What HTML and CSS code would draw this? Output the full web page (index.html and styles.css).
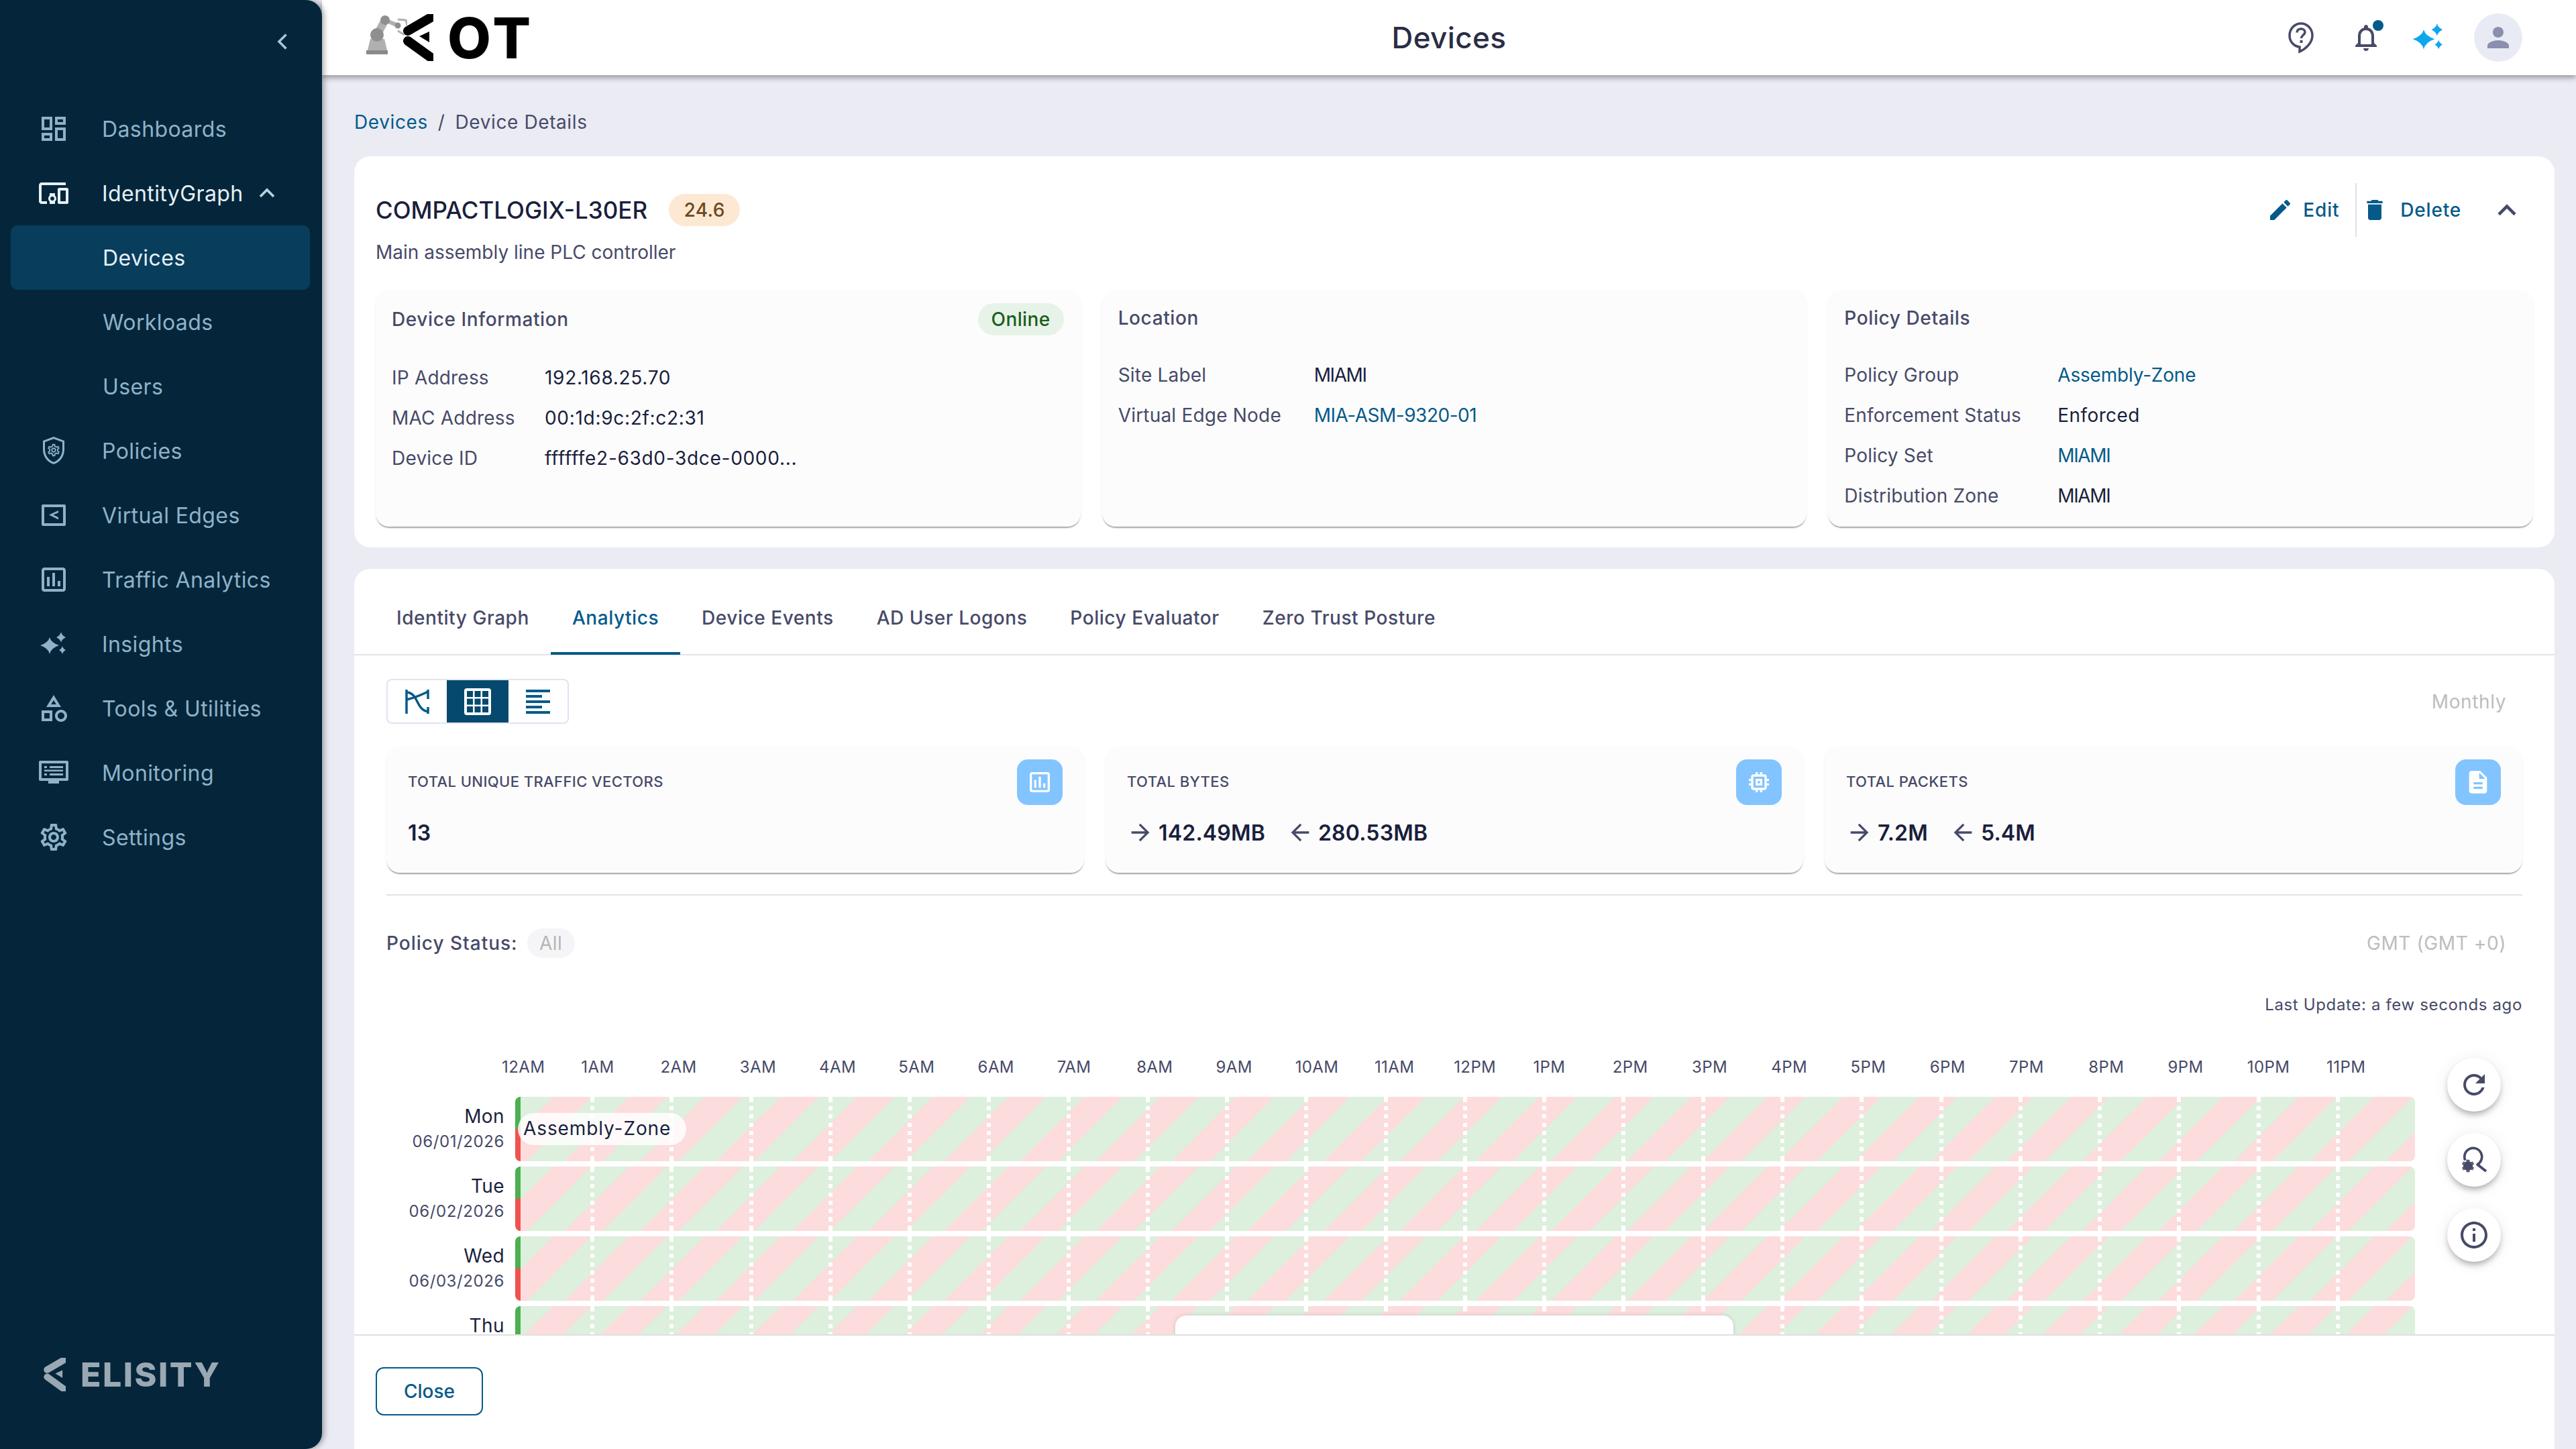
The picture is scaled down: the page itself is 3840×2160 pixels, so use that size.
FILE: index.html
```html
<!DOCTYPE html>
<html lang="en">
<head>
    <meta charset="UTF-8">
    <title>Devices</title>
    <link rel="stylesheet" href="styles.css">
</head>
<body>
<svg class="defs" width="0" height="0">
    <symbol id="sparkle" viewBox="0 0 40 36">
        <path d="M14 8Q16 16 28 20Q16 24 14 33Q12 24 0 20Q12 16 14 8Z"/>
        <path d="M31 0Q32 5 38 8Q32 11 31 16Q30 11 24 8Q30 5 31 0Z"/>
        <path d="M33 21Q34 25 38 27Q34 29 33 33Q32 29 28 27Q32 25 33 21Z"/>
    </symbol>
    <symbol id="chevron-mark" viewBox="0 0 46 70">
        <path d="M44 4L8 25" fill="none" stroke="currentColor" stroke-width="14" stroke-linecap="round"/>
        <path d="M8 40L44 66" fill="none" stroke="currentColor" stroke-width="14" stroke-linecap="round"/>
        <path d="M25 33L40 26V42Z"/>
    </symbol>
    <symbol id="bars" viewBox="0 0 24 24">
        <path d="M19 3H5c-1.1 0-2 .9-2 2v14c0 1.1.9 2 2 2h14c1.1 0 2-.9 2-2V5c0-1.1-.9-2-2-2zm0 16H5V5h14v14z M7 10h2v7H7zm4-3h2v10h-2zm4 6h2v4h-2z"/>
    </symbol>
    <symbol id="gear" viewBox="0 0 24 24">
        <path d="M19.43 12.98c.04-.32.07-.64.07-.98 0-.34-.03-.66-.07-.98l2.11-1.65c.19-.15.24-.42.12-.64l-2-3.46c-.09-.16-.26-.25-.44-.25-.06 0-.12.01-.17.03l-2.49 1c-.52-.4-1.08-.73-1.69-.98l-.38-2.65C14.46 2.18 14.25 2 14 2h-4c-.25 0-.46.18-.49.42l-.38 2.65c-.61.25-1.17.59-1.69.98l-2.49-1c-.06-.02-.12-.03-.18-.03-.17 0-.34.09-.43.25l-2 3.46c-.13.22-.07.49.12.64l2.11 1.65c-.04.32-.07.65-.07.98 0 .33.03.66.07.98l-2.11 1.65c-.19.15-.24.42-.12.64l2 3.46c.09.16.26.25.44.25.06 0 .12-.01.17-.03l2.49-1c.52.4 1.08.73 1.69.98l.38 2.65c.03.24.24.42.49.42h4c.25 0 .46-.18.49-.42l.38-2.65c.61-.25 1.17-.59 1.69-.98l2.49 1c.06.02.12.03.18.03.17 0 .34-.09.43-.25l2-3.46c.12-.22.07-.49-.12-.64l-2.11-1.65zm-1.98-1.71c.04.31.05.52.05.73 0 .21-.02.43-.05.73l-.14 1.13.89.7 1.08.84-.7 1.21-1.27-.51-1.04-.42-.9.68c-.43.32-.84.56-1.25.73l-1.06.43-.16 1.13-.2 1.35h-1.4l-.19-1.35-.16-1.13-1.06-.43c-.43-.18-.83-.41-1.23-.71l-.91-.7-1.06.43-1.27.51-.7-1.21 1.08-.84.89-.7-.14-1.13c-.03-.31-.05-.54-.05-.74s.02-.43.05-.73l.14-1.13-.89-.7-1.08-.84.7-1.21 1.27.51 1.04.42.9-.68c.43-.32.84-.56 1.25-.73l1.06-.43.16-1.13.2-1.35h1.39l.19 1.35.16 1.13 1.06.43c.43.18.83.41 1.23.71l.91.7 1.06-.43 1.27-.51.7 1.21-1.07.85-.89.7.14 1.13zM12 8c-2.21 0-4 1.79-4 4s1.79 4 4 4 4-1.79 4-4-1.79-4-4-4zm0 6c-1.1 0-2-.9-2-2s.9-2 2-2 2 .9 2 2-.9 2-2 2z"/>
    </symbol>
    <symbol id="arrow-right" viewBox="0 0 24 24">
        <path d="M12 4l-1.41 1.41L16.17 11H4v2h12.17l-5.58 5.59L12 20l8-8z"/>
    </symbol>
    <symbol id="arrow-left" viewBox="0 0 24 24">
        <path d="M20 11H7.83l5.59-5.59L12 4l-8 8 8 8 1.41-1.41L7.83 13H20z"/>
    </symbol>
</svg>

<div class="app">
    <aside class="sidebar">
        <div class="collapse-row">
            <svg class="chev-small" viewBox="0 0 24 24"><path d="M15 5l-7 7 7 7" fill="none" stroke="currentColor" stroke-width="2.4"/></svg>
        </div>
        <nav class="nav">
            <a class="nav-item">
                <svg class="nav-icon" viewBox="0 0 24 24"><path d="M19 5v2h-4V5h4M9 5v6H5V5h4m10 8v6h-4v-6h4M9 17v2H5v-2h4M21 3h-8v6h8V3zM11 3H3v10h8V3zm10 8h-8v10h8V11zm-10 4H3v6h8v-6z"/></svg>
                <span>Dashboards</span>
            </a>
            <a class="nav-item open">
                <svg class="nav-icon" viewBox="0 0 24 24"><path d="M3 6h18V4H3c-1.1 0-2 .9-2 2v12c0 1.1.9 2 2 2h4v-2H3V6zm10 6H9v1.78c-.61.55-1 1.33-1 2.22s.39 1.67 1 2.22V20h4v-1.78c.61-.55 1-1.34 1-2.22s-.39-1.67-1-2.22V12zm-2 5.5c-.83 0-1.5-.67-1.5-1.5s.67-1.5 1.5-1.5 1.5.67 1.5 1.5-.67 1.5-1.5 1.5zM22 8h-6c-.5 0-1 .5-1 1v10c0 .5.5 1 1 1h6c.5 0 1-.5 1-1V9c0-.5-.5-1-1-1zm-1 10h-4v-8h4v8z"/></svg>
                <span>IdentityGraph</span>
                <svg class="nav-caret" viewBox="0 0 24 24"><path d="M4 16l8-8 8 8" fill="none" stroke="currentColor" stroke-width="3"/></svg>
            </a>
            <a class="nav-item sub active"><span>Devices</span></a>
            <a class="nav-item sub"><span>Workloads</span></a>
            <a class="nav-item sub"><span>Users</span></a>
            <a class="nav-item">
                <svg class="nav-icon" viewBox="0 0 24 24"><path d="M12 1.5L4 4.5v6.6c0 5.05 3.41 9.76 8 10.9 4.59-1.14 8-5.85 8-10.9V4.5l-8-3zm6.5 9.6c0 4.2-2.8 8.1-6.5 9.3-3.7-1.2-6.5-5.1-6.5-9.3V5.5L12 3.1l6.5 2.4v5.6z"/><use href="#gear" x="6.5" y="6" width="11" height="11"/></svg>
                <span>Policies</span>
            </a>
            <a class="nav-item">
                <svg class="nav-icon" viewBox="0 0 24 24"><path d="M20 4H4c-.6 0-1 .4-1 1v14c0 .6.4 1 1 1h16c.6 0 1-.4 1-1V5c0-.6-.4-1-1-1zm-1 14H5V6h14v12z"/><path d="M15.5 8.5L8.5 11.8l7 3.4v-1.7l-3.8-1.7 3.8-1.7z"/></svg>
                <span>Virtual Edges</span>
            </a>
            <a class="nav-item">
                <svg class="nav-icon"><use href="#bars"/></svg>
                <span>Traffic Analytics</span>
            </a>
            <a class="nav-item">
                <svg class="nav-icon spark"><use href="#sparkle"/></svg>
                <span>Insights</span>
            </a>
            <a class="nav-item">
                <svg class="nav-icon" viewBox="0 0 24 24"><path d="M12 2l-5.5 9h11L12 2zm0 3.84L13.93 9h-3.87L12 5.84zM17.5 13c-2.49 0-4.5 2.01-4.5 4.5s2.01 4.5 4.5 4.5 4.5-2.01 4.5-4.5-2.01-4.5-4.5-4.5zm0 7c-1.38 0-2.5-1.12-2.5-2.5s1.12-2.5 2.5-2.5 2.5 1.12 2.5 2.5-1.12 2.5-2.5 2.5zM3 21.5h8v-8H3v8zm2-6h4v4H5v-4z"/></svg>
                <span>Tools &amp; Utilities</span>
            </a>
            <a class="nav-item">
                <svg class="nav-icon" viewBox="0 0 24 24"><path d="M22 3H2C1.4 3 1 3.4 1 4v13c0 .6.4 1 1 1h6v2h8v-2h6c.6 0 1-.4 1-1V4c0-.6-.4-1-1-1zm-1 13H3V5h18v11z"/><path d="M5 7h2v1.5H5zM9 7h10v1.5H9zM5 12.5h2V14H5zM9 12.5h10V14H9zM5 9.8h14V11H5z"/></svg>
                <span>Monitoring</span>
            </a>
            <a class="nav-item">
                <svg class="nav-icon"><use href="#gear"/></svg>
                <span>Settings</span>
            </a>
        </nav>
        <div class="side-logo">
            <svg class="side-mark"><use href="#chevron-mark"/></svg>
            <span class="side-word">ELISITY</span>
        </div>
    </aside>

    <div class="content">
        <header class="topbar">
            <div class="brand">
                <svg class="robot" viewBox="0 0 62 60">
                    <path d="M7 36H28L32 53H3Z" fill="#b0b0b0"/>
                    <rect x="1" y="53" width="32" height="6" fill="#8a8a8a"/>
                    <path d="M17 30L29 8" stroke="#b0b0b0" stroke-width="12"/>
                    <path d="M29 8L48 16" stroke="#b0b0b0" stroke-width="6"/>
                    <path d="M48 7L60 8L62 16M48 24L58 30" fill="none" stroke="#b0b0b0" stroke-width="3"/>
                    <circle cx="17" cy="30" r="10" fill="#8f8f8f"/>
                    <circle cx="29" cy="8" r="7" fill="#8f8f8f"/>
                    <circle cx="48" cy="16" r="4.5" fill="#8f8f8f"/>
                </svg>
                <svg class="brand-mark"><use href="#chevron-mark"/></svg>
                <span class="brand-ot">OT</span>
            </div>
            <h1 class="page-title">Devices</h1>
            <div class="top-actions">
                <svg class="help" viewBox="0 0 40 48"><path d="M20 3C10.5 3 3 11 3 21c0 9 6.5 16 15 17v7c9-4 19-13 19-24C37 11 29.5 3 20 3z" fill="none" stroke="#474a68" stroke-width="3.5"/><path d="M14 16.5c0-3.5 2.8-5.500 6-5.500s6 2 6 5c0 4-5.500 4.500-5.500 9" fill="none" stroke="#474a68" stroke-width="3.5"/><rect x="18.5" y="28" width="4" height="4" fill="#474a68"/></svg>
                <span class="bell">
                    <svg viewBox="0 0 24 24"><path d="M12 22c1.1 0 2-.9 2-2h-4c0 1.1.9 2 2 2zm6-6v-5c0-3.07-1.63-5.64-4.5-6.32V4c0-.83-.67-1.5-1.5-1.5s-1.5.67-1.5 1.5v.68C7.64 5.36 6 7.92 6 11v5l-2 2v1h16v-1l-2-2zm-2 1H8v-6c0-2.48 1.51-4.5 4-4.5s4 2.02 4 4.5v6z"/></svg>
                    <i class="bell-dot"></i>
                </span>
                <svg class="ai-spark"><use href="#sparkle"/></svg>
                <span class="avatar">
                    <svg viewBox="0 0 24 24"><path d="M12 12c2.21 0 4-1.79 4-4s-1.79-4-4-4-4 1.79-4 4 1.79 4 4 4zm0 2c-2.67 0-8 1.34-8 4v2h16v-2c0-2.66-5.33-4-8-4z"/></svg>
                </span>
            </div>
        </header>

        <main class="page">
            <div class="breadcrumb">
                <a class="link">Devices</a><span class="crumb-sep">/</span><span>Device Details</span>
            </div>

            <section class="card summary">
                <div class="summary-head">
                    <div>
                        <div class="device-title">
                            <h2>COMPACTLOGIX-L30ER</h2>
                            <span class="version">24.6</span>
                        </div>
                        <p class="device-desc">Main assembly line PLC controller</p>
                    </div>
                    <div class="summary-actions">
                        <a class="action edit">
                            <svg viewBox="0 0 24 24"><path d="M3 17.25V21h3.75L17.81 9.94l-3.75-3.75L3 17.25zM20.71 7.04c.39-.39.39-1.02 0-1.41l-2.34-2.34c-.39-.39-1.02-.39-1.41 0l-1.83 1.83 3.75 3.75 1.83-1.83z"/></svg>
                            <span>Edit</span>
                        </a>
                        <i class="action-sep"></i>
                        <a class="action">
                            <svg viewBox="0 0 24 24"><path d="M6 19c0 1.1.9 2 2 2h8c1.1 0 2-.9 2-2V7H6v12zM19 4h-3.5l-1-1h-5l-1 1H5v2h14V4z"/></svg>
                            <span>Delete</span>
                        </a>
                        <svg class="summary-caret" viewBox="0 0 24 24"><path d="M3 17l9-9 9 9" fill="none" stroke="#474a68" stroke-width="3.5"/></svg>
                    </div>
                </div>

                <div class="info-grid">
                    <div class="info-card">
                        <div class="info-head">
                            <h3>Device Information</h3>
                            <span class="status-pill">Online</span>
                        </div>
                        <dl class="info-list device-list">
                            <dt>IP Address</dt><dd>192.168.25.70</dd>
                            <dt>MAC Address</dt><dd>00:1d:9c:2f:c2:31</dd>
                            <dt>Device ID</dt><dd>ffffffe2-63d0-3dce-0000...</dd>
                        </dl>
                    </div>
                    <div class="info-card">
                        <div class="info-head"><h3>Location</h3></div>
                        <dl class="info-list location-list">
                            <dt>Site Label</dt><dd class="caps">MIAMI</dd>
                            <dt>Virtual Edge Node</dt><dd class="link">MIA-ASM-9320-01</dd>
                        </dl>
                    </div>
                    <div class="info-card">
                        <div class="info-head"><h3>Policy Details</h3></div>
                        <dl class="info-list policy-list">
                            <dt>Policy Group</dt><dd class="link">Assembly-Zone</dd>
                            <dt>Enforcement Status</dt><dd>Enforced</dd>
                            <dt>Policy Set</dt><dd class="link caps">MIAMI</dd>
                            <dt>Distribution Zone</dt><dd class="caps">MIAMI</dd>
                        </dl>
                    </div>
                </div>
            </section>

            <section class="card detail">
                <div class="tabs">
                    <a class="tab">Identity Graph</a>
                    <a class="tab active">Analytics</a>
                    <a class="tab">Device Events</a>
                    <a class="tab">AD User Logons</a>
                    <a class="tab">Policy Evaluator</a>
                    <a class="tab">Zero Trust Posture</a>
                </div>

                <div class="detail-body">
                    <div class="view-row">
                        <div class="view-toggle">
                            <button class="view-btn">
                                <svg viewBox="0 0 36 36"><path d="M2 0V36M34 0V14M34 26V36M2 15C14 12 24 8 34 3M3 4C20 6 16 30 34 33" fill="none" stroke="#065a8a" stroke-width="3.5"/></svg>
                            </button>
                            <button class="view-btn active">
                                <svg viewBox="0 0 40 40"><rect x="0" y="0" width="40" height="40" rx="4" fill="#fff"/><path d="M4 4h9v9H4zM15.5 4h9v9h-9zM27 4h9v9h-9zM4 15.5h9v9H4zM15.5 15.5h9v9h-9zM27 15.5h9v9h-9zM4 27h9v9H4zM15.5 27h9v9h-9zM27 27h9v9h-9z" fill="#06496e"/></svg>
                            </button>
                            <button class="view-btn">
                                <svg viewBox="0 0 36 36"><path d="M0 0h36v4H0zM0 8h24v4H0zM0 16h36v4H0zM0 24h24v4H0zM0 32h36v4H0z" fill="#065a8a"/></svg>
                            </button>
                        </div>
                        <span class="muted-select">Monthly</span>
                    </div>

                    <div class="stat-grid">
                        <div class="stat-card">
                            <div class="stat-head">
                                <span class="stat-label">TOTAL UNIQUE TRAFFIC VECTORS</span>
                                <span class="stat-icon"><svg><use href="#bars"/></svg></span>
                            </div>
                            <div class="stat-value">13</div>
                        </div>
                        <div class="stat-card">
                            <div class="stat-head">
                                <span class="stat-label">TOTAL BYTES</span>
                                <span class="stat-icon"><svg viewBox="0 0 24 24"><path d="M15 9H9v6h6V9zm-2 4h-2v-2h2v2zm8-2V9h-2V7c0-1.1-.9-2-2-2h-2V3h-2v2h-2V3H9v2H7c-1.1 0-2 .9-2 2v2H3v2h2v2H3v2h2v2c0 1.1.9 2 2 2h2v2h2v-2h2v2h2v-2h2c1.1 0 2-.9 2-2v-2h2v-2h-2v-2h2zm-4 6H7V7h10v10z"/></svg></span>
                            </div>
                            <div class="stat-value">
                                <svg class="stat-arrow"><use href="#arrow-right"/></svg><span>142.49MB</span>
                                <svg class="stat-arrow second"><use href="#arrow-left"/></svg><span>280.53MB</span>
                            </div>
                        </div>
                        <div class="stat-card">
                            <div class="stat-head">
                                <span class="stat-label">TOTAL PACKETS</span>
                                <span class="stat-icon"><svg viewBox="0 0 24 24"><path d="M14 2H6c-1.1 0-1.99.9-1.99 2L4 20c0 1.1.89 2 1.99 2H18c1.1 0 2-.9 2-2V8l-6-6zm2 16H8v-2h8v2zm0-4H8v-2h8v2zm-3-5V3.5L18.5 9H13z"/></svg></span>
                            </div>
                            <div class="stat-value">
                                <svg class="stat-arrow"><use href="#arrow-right"/></svg><span>7.2M</span>
                                <svg class="stat-arrow second"><use href="#arrow-left"/></svg><span>5.4M</span>
                            </div>
                        </div>
                    </div>

                    <div class="filter-row">
                        <div class="policy-filter">
                            <span class="filter-label">Policy Status:</span>
                            <span class="filter-chip">All</span>
                        </div>
                        <span class="muted-select">GMT (GMT +0)</span>
                    </div>

                    <div class="last-update">Last Update: a few seconds ago</div>

                    <div class="heat">
                        <div class="heat-main">
                            <div class="heat-hours" id="heatHours"></div>
                            <div class="heat-rows" id="heatRows"></div>
                        </div>
                        <div class="heat-tools">
                            <button class="fab"><svg viewBox="0 0 24 24"><path d="M17.65 6.35C16.2 4.9 14.21 4 12 4c-4.42 0-7.99 3.58-7.99 8s3.57 8 7.99 8c3.73 0 6.84-2.55 7.73-6h-2.08c-.82 2.33-3.04 4-5.65 4-3.31 0-6-2.69-6-6s2.69-6 6-6c1.66 0 3.14.69 4.22 1.78L13 11h7V4l-2.35 2.35z"/></svg></button>
                            <button class="fab"><svg viewBox="0 0 24 24"><path d="M5.400 12.300A6.500 6.500 0 1 1 14.300 15.500" fill="none" stroke="#474a68" stroke-width="1.800"/><path d="M14 15L21 20.500" fill="none" stroke="#474a68" stroke-width="2"/><circle cx="7.500" cy="16.500" r="3.400"/><use href="#gear" x="2" y="11" width="11" height="11"/></svg></button>
                            <button class="fab"><svg viewBox="0 0 24 24"><path d="M11 7h2v2h-2zm0 4h2v6h-2zm1-9C6.48 2 2 6.48 2 12s4.48 10 10 10 10-4.48 10-10S17.52 2 12 2zm0 18c-4.41 0-8-3.59-8-8s3.59-8 8-8 8 3.59 8 8-3.59 8-8 8z"/></svg></button>
                        </div>
                    </div>

                    <div class="floating-panel"></div>
                </div>

                <div class="detail-foot">
                    <button class="btn-close">Close</button>
                </div>
            </section>
        </main>
    </div>
</div>
<script src="script.js"></script>
</body>
</html>
```

FILE: styles.css
```css
* {
    box-sizing: border-box;
}
html, body {
    margin: 0;
    padding: 0;
}
body {
    font-family: "Inter", "Liberation Sans", sans-serif;
    font-size: 28px;
    letter-spacing: 0.4px;
    color: #1a1f3d;
    background-color: #eaebf3;
}
h1, h2, h3, p, dl, dd {
    margin: 0;
}
button {
    font-family: inherit;
    border: none;
    padding: 0;
    background: none;
}
.defs {
    position: absolute;
}
.link {
    color: #065a8a;
}
.app {
    display: flex;
    width: 3840px;
    height: 2160px;
    overflow: hidden;
}

/* sidebar */
.sidebar {
    width: 480px;
    flex: none;
    display: flex;
    flex-direction: column;
    background-color: #05263a;
    border-radius: 0 24px 24px 0;
    box-shadow: 3px 0 8px rgba(0, 0, 0, 0.35);
    position: relative;
    z-index: 3;
}
.collapse-row {
    height: 144px;
    padding: 44px 40px 0 0;
    display: flex;
    justify-content: flex-end;
}
.chev-small {
    width: 36px;
    height: 36px;
    color: #a9c4d6;
}
.nav {
    display: flex;
    flex-direction: column;
}
.nav-item {
    height: 96px;
    margin: 0 18px 0 16px;
    padding-left: 40px;
    display: flex;
    align-items: center;
    border-radius: 10px;
    font-size: 32px;
    color: #8fb2c9;
    fill: #8fb2c9;
}
.nav-item span {
    margin-left: 48px;
}
.nav-icon {
    width: 48px;
    height: 48px;
    flex: none;
    fill: #8fb2c9;
    margin-left: 0;
}
.nav-icon.spark {
    height: 36px;
}
.nav-item.sub span {
    margin-left: 97px;
}
.nav-item.open {
    color: #e6f0f6;
}
.nav-item.open .nav-icon {
    fill: #e6f0f6;
}
.nav-caret {
    width: 30px;
    height: 30px;
    margin-left: 20px;
    color: #b8d0df;
}
.nav-item.active {
    background-color: #083d5c;
    color: #e6f0f6;
}
.side-logo {
    margin-top: auto;
    padding: 0 0 86px 64px;
    display: flex;
    align-items: center;
    color: #9aa8b4;
    fill: #9aa8b4;
}
.side-mark {
    width: 34px;
    height: 50px;
}
.side-word {
    margin-left: 22px;
    font-size: 50px;
    line-height: 48px;
    font-weight: 800;
    letter-spacing: 2.5px;
}

/* top bar */
.content {
    flex: 1;
    min-width: 0;
    display: flex;
    flex-direction: column;
}
.topbar {
    height: 112px;
    flex: none;
    padding: 0 80px 0 64px;
    display: flex;
    align-items: center;
    justify-content: space-between;
    position: relative;
    background-color: #fff;
    box-shadow: 0 4px 8px rgba(0, 0, 0, 0.35);
    z-index: 2;
}
.brand {
    display: flex;
    align-items: center;
}
.robot {
    width: 62px;
    height: 60px;
    margin-top: -8px;
    margin-left: 1px;
    flex: none;
}
.brand-mark {
    width: 46px;
    height: 70px;
    margin-left: -7px;
    color: #000;
    fill: #000;
    position: relative;
}
.brand-ot {
    margin-left: 21px;
    margin-top: 2px;
    font-size: 84px;
    line-height: 84px;
    font-weight: 800;
    color: #000;
    letter-spacing: 5px;
}
.page-title {
    position: absolute;
    left: 0;
    right: 0;
    text-align: center;
    font-size: 44px;
    font-weight: 500;
    color: #2a2d45;
    letter-spacing: 0.4px;
}
.top-actions {
    display: flex;
    align-items: center;
}
.help {
    width: 40px;
    height: 48px;
}
.bell {
    width: 48px;
    height: 48px;
    margin-left: 53px;
    position: relative;
    fill: #474a68;
}
.bell-dot {
    position: absolute;
    top: -2px;
    right: -2px;
    width: 16px;
    height: 16px;
    border-radius: 50%;
    background-color: #065a8a;
}
.ai-spark {
    width: 50px;
    height: 42px;
    margin-left: 44px;
    fill: #0da7ee;
}
.avatar {
    width: 72px;
    height: 72px;
    margin-left: 43px;
    border-radius: 50%;
    background-color: #e9ebf4;
    display: flex;
    align-items: center;
    justify-content: center;
    fill: #8a8fae;
}
.avatar svg {
    width: 48px;
    height: 48px;
}

/* page */
.page {
    flex: 1;
    min-height: 0;
    padding: 0 32px 0 48px;
    display: flex;
    flex-direction: column;
}
.breadcrumb {
    height: 121px;
    padding-top: 52px;
    line-height: 36px;
    color: #474a68;
    letter-spacing: 0.6px;
}
.crumb-sep {
    margin: 0 15px;
}
.card {
    background-color: #fff;
    border-radius: 24px;
}
.summary {
    height: 583px;
    padding: 0 32px;
}
.summary-head {
    height: 202px;
    padding-top: 60px;
    display: flex;
    justify-content: space-between;
}
.device-title {
    display: flex;
    align-items: center;
    height: 40px;
}
.device-title h2 {
    font-size: 35px;
    font-weight: 500;
    letter-spacing: 0;
}
.version {
    margin-left: 32px;
    width: 106px;
    height: 48px;
    line-height: 48px;
    text-align: center;
    border-radius: 24px;
    background-color: #fde9d3;
    color: #6b4a20;
    font-weight: 500;
}
.device-desc {
    margin-top: 25px;
    line-height: 36px;
    color: #474a68;
    letter-spacing: 0;
}
.summary-actions {
    display: flex;
    align-items: center;
    height: 80px;
    margin-top: -20px;
}
.action {
    display: flex;
    align-items: center;
    color: #065a8a;
    fill: #065a8a;
    font-weight: 500;
    letter-spacing: 0.8px;
}
.action svg {
    width: 40px;
    height: 40px;
    margin-right: 18px;
}
.action.edit svg {
    margin-right: 14px;
}
.action-sep {
    width: 2px;
    height: 80px;
    background-color: #dfe1ec;
    margin: 0 7px 0 24px;
}
.summary-caret {
    width: 32px;
    height: 32px;
    margin-left: 52px;
    margin-right: 23px;
}
.info-grid {
    display: grid;
    grid-template-columns: repeat(3, 1fr);
    gap: 32px;
}
.info-card {
    height: 350px;
    padding: 17px 24px;
    background-color: #fcfcfc;
    border-radius: 20px;
    box-shadow: 0 3px 2px -1px rgba(0, 0, 0, 0.35), 0 0 6px rgba(0, 0, 0, 0.03);
}
.info-head {
    min-height: 44px;
    display: flex;
    align-items: center;
    justify-content: space-between;
    margin-bottom: 33px;
}
.info-head h3 {
    font-size: 28px;
    font-weight: 500;
    color: #474a68;
    letter-spacing: 0.6px;
}
.status-pill {
    height: 48px;
    line-height: 48px;
    padding: 0 20px;
    margin-right: 1px;
    border-radius: 24px;
    background-color: #e7f3e8;
    color: #1b5e20;
    font-weight: 500;
}
.info-list {
    display: grid;
    grid-auto-rows: 60px;
    align-items: center;
}
.device-list {
    grid-template-columns: 228px 1fr;
}
.device-list dd {
    letter-spacing: 0.7px;
}
.location-list {
    grid-template-columns: 292px 1fr;
}
.policy-list {
    grid-template-columns: 318px 1fr;
}
.info-list dt {
    color: #474a68;
    letter-spacing: 0.2px;
}
.info-list .link {
    letter-spacing: -0.2px;
}
.location-list .link {
    letter-spacing: -0.5px;
}
.info-list .caps {
    letter-spacing: -1.4px;
}

/* detail card */
.detail {
    flex: 1;
    min-height: 0;
    margin-top: 32px;
    border-radius: 24px 24px 0 0;
    display: flex;
    flex-direction: column;
    overflow: hidden;
}
.tabs {
    flex: none;
    height: 129px;
    padding: 32px 0 0 31px;
    display: flex;
    border-bottom: 2px solid #e3e4ea;
}
.tab {
    height: 96px;
    padding: 24px 32px 0;
    line-height: 34px;
    color: #474a68;
    font-weight: 500;
    letter-spacing: 0.55px;
}
.tab.active {
    color: #065a8a;
    border-bottom: 4px solid #065a8a;
}
.detail-body {
    flex: 1;
    min-height: 0;
    padding: 35px 48px 0;
    overflow: hidden;
    position: relative;
}
.view-row {
    height: 67px;
    padding-right: 24px;
    display: flex;
    justify-content: space-between;
    align-items: center;
}
.muted-select {
    color: #bdbdbd;
    letter-spacing: 0.6px;
}
.view-toggle {
    display: flex;
    height: 67px;
    border: 2px solid #e0e4ef;
    border-radius: 8px;
    overflow: hidden;
}
.view-btn {
    width: 88px;
    display: flex;
    align-items: center;
    justify-content: center;
}
.view-btn svg {
    width: 36px;
    height: 36px;
}
.view-btn.active {
    width: 92px;
    background-color: #06496e;
}
.view-btn.active svg {
    width: 40px;
    height: 40px;
}
.stat-grid {
    margin-top: 36px;
    padding-bottom: 32px;
    display: grid;
    grid-template-columns: repeat(3, 1fr);
    gap: 32px;
    border-bottom: 2px solid #e3e3e3;
}
.stat-card {
    height: 186px;
    padding: 17px 32px 0;
    background-color: #fcfcfc;
    border-radius: 20px;
    box-shadow: 0 3px 2px -1px rgba(0, 0, 0, 0.35), 0 0 6px rgba(0, 0, 0, 0.03);
}
.stat-head {
    display: flex;
    align-items: center;
    justify-content: space-between;
}
.stat-label {
    font-size: 22px;
    font-weight: 500;
    color: #474a68;
    letter-spacing: 0.4px;
    padding-bottom: 3px;
}
.stat-icon {
    width: 68px;
    height: 68px;
    border-radius: 16px;
    background-color: #82c4ff;
    display: flex;
    align-items: center;
    justify-content: center;
    fill: #fff;
}
.stat-icon svg {
    width: 40px;
    height: 40px;
}
.stat-value {
    margin-top: 21px;
    height: 40px;
    display: flex;
    align-items: center;
    font-size: 32px;
    font-weight: 600;
    letter-spacing: 0.2px;
}
.stat-arrow {
    width: 40px;
    height: 40px;
    margin-right: 7px;
    fill: #474a68;
}
.stat-arrow.second {
    margin-left: 32px;
}
.filter-row {
    margin-top: 48px;
    height: 46px;
    padding-right: 24px;
    display: flex;
    justify-content: space-between;
    align-items: center;
}
.policy-filter {
    display: flex;
    align-items: center;
}
.filter-label {
    color: #474a68;
    font-weight: 500;
    letter-spacing: 1px;
}
.filter-chip {
    margin-left: 14px;
    width: 71px;
    height: 44px;
    line-height: 44px;
    text-align: center;
    border-radius: 22px;
    background-color: #f5f5f7;
    color: #b5b5b5;
}
.last-update {
    margin-top: 53px;
    line-height: 32px;
    text-align: right;
    font-size: 24px;
    letter-spacing: 0.65px;
    color: #474a68;
}

/* heat map */
.heat {
    margin-top: 60px;
    display: flex;
}
.heat-main {
    width: 3024px;
    flex: none;
}
.heat-hours {
    height: 34px;
    padding-left: 172px;
    display: flex;
    line-height: 34px;
    font-size: 24px;
    color: #474a68;
}
.hour {
    width: 118.27px;
    flex: none;
}
.heat-rows {
    margin-top: 27px;
    display: flex;
    flex-direction: column;
    gap: 8px;
}
.heat-row {
    display: flex;
    height: 96px;
}
.day-label {
    width: 176px;
    padding-top: 10px;
    margin-right: 16px;
    flex: none;
    text-align: right;
}
.day-name {
    line-height: 38px;
    font-size: 28px;
}
.day-date {
    line-height: 38px;
    font-size: 24px;
    letter-spacing: 0.6px;
    color: #474a68;
}
.heat-bar {
    flex: 1;
    display: flex;
    position: relative;
    border-radius: 8px;
    overflow: hidden;
    background: repeating-linear-gradient(135deg, #ddefdd 0 40px, #fcdcdc 40px 80px);
}
.heat-status {
    width: 8px;
    flex: none;
    background: linear-gradient(to bottom, #4caf50 0 50%, #ef5350 50% 100%);
}
.heat-cell {
    width: 118.27px;
    flex: none;
    background:
        linear-gradient(#fff, #fff) right top / 6px 8px no-repeat,
        linear-gradient(#fff, #fff) right bottom / 6px 8px no-repeat,
        repeating-linear-gradient(to bottom, #fff 0 6px, transparent 6px 12.25px) right 2px / 6px 94px no-repeat;
}
.heat-status + .heat-cell {
    width: 110px;
}
.heat-cell:last-of-type {
    flex: 1;
    background: none;
}
.zone-chip {
    position: absolute;
    left: 4px;
    top: 24px;
    width: 251px;
    height: 48px;
    padding-left: 8px;
    line-height: 46px;
    font-size: 28px;
    letter-spacing: 0.9px;
    border-radius: 24px;
    background-color: rgba(255, 255, 255, 0.82);
}
.heat-tools {
    margin-top: 3px;
    margin-left: 48px;
    width: 80px;
    display: flex;
    flex-direction: column;
    gap: 32px;
}
.fab {
    width: 80px;
    height: 80px;
    border-radius: 50%;
    background-color: #fff;
    display: flex;
    align-items: center;
    justify-content: center;
    fill: #474a68;
    box-shadow: 0 6px 10px -2px rgba(0, 0, 0, 0.3), 0 2px 24px rgba(0, 0, 0, 0.08);
}
.fab svg {
    width: 48px;
    height: 48px;
}
.floating-panel {
    position: absolute;
    left: 50%;
    margin-left: -416px;
    bottom: -172px;
    width: 832px;
    height: 200px;
    border-radius: 16px;
    background-color: #fff;
    box-shadow: 0 0 6px rgba(0, 0, 0, 0.15);
}
.detail-foot {
    flex: none;
    height: 171px;
    padding: 47px 32px 0;
    border-top: 2px solid #e0e0e0;
    background-color: #fff;
    position: relative;
}
.btn-close {
    width: 160px;
    height: 72px;
    border: 2px solid #065a8a;
    border-radius: 12px;
    font-size: 28px;
    font-weight: 500;
    color: #065a8a;
    background-color: #fff;
}
```

FILE: script.js
```js
// Hour labels and day rows for the heat map
const hours = ['12AM', '1AM', '2AM', '3AM', '4AM', '5AM', '6AM', '7AM', '8AM', '9AM', '10AM', '11AM',
    '12PM', '1PM', '2PM', '3PM', '4PM', '5PM', '6PM', '7PM', '8PM', '9PM', '10PM', '11PM'];
const days = [
    { name: 'Mon', date: '06/01/2026', zone: 'Assembly-Zone' },
    { name: 'Tue', date: '06/02/2026' },
    { name: 'Wed', date: '06/03/2026' },
    { name: 'Thu', date: '06/04/2026' }
];

const hoursEl = document.getElementById('heatHours');
hours.forEach(label => {
    const hour = document.createElement('span');
    hour.className = 'hour';
    hour.textContent = label;
    hoursEl.appendChild(hour);
});

const rowsEl = document.getElementById('heatRows');
days.forEach(day => {
    const row = document.createElement('div');
    row.className = 'heat-row';
    const cells = hours.map(() => '<div class="heat-cell"></div>').join('');
    const chip = day.zone ? `<span class="zone-chip">${day.zone}</span>` : '';
    row.innerHTML = `
        <div class="day-label">
            <div class="day-name">${day.name}</div>
            <div class="day-date">${day.date}</div>
        </div>
        <div class="heat-bar">
            <div class="heat-status"></div>
            ${cells}
            ${chip}
        </div>
    `;
    rowsEl.appendChild(row);
});
```
